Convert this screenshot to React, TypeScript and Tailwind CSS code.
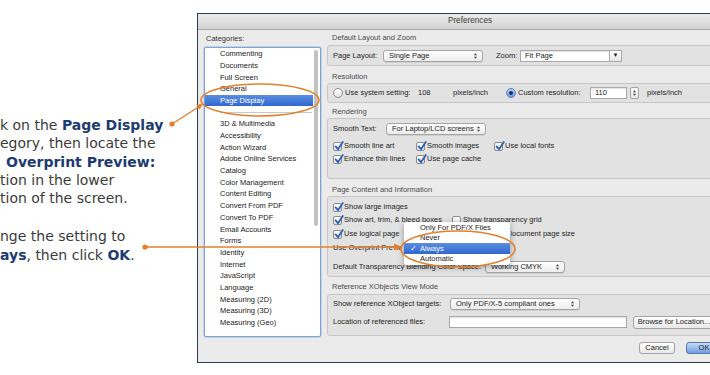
const ORANGE = '#e3802c';

function Check({ on = true }: { on?: boolean }) {
  return (
    <span className="relative inline-flex h-[9px] w-[9px] shrink-0 items-center justify-center rounded-[2px] border border-[#8c8c8c] bg-gradient-to-b from-white to-[#e6e6e6]">
      {on && (
        <svg viewBox="0 0 10 10" className="absolute -top-[2px] left-[0px] h-[10px] w-[10px]">
          <path d="M1.6 5.4 L4 8.2 L8.8 1" fill="none" stroke="#2c5fb8" strokeWidth="1.8" strokeLinecap="round" strokeLinejoin="round" />
        </svg>
      )}
    </span>
  );
}

function Radio({ on = false }: { on?: boolean }) {
  return (
    <span
      className={`inline-flex h-[10px] w-[10px] shrink-0 items-center justify-center rounded-full border ${
        on ? 'border-[#5a7fbf] bg-gradient-to-b from-[#bcd3f2] to-[#6e9ae0]' : 'border-[#8c8c8c] bg-gradient-to-b from-white to-[#e4e4e4]'
      }`}
    >
      {on && <span className="h-[4px] w-[4px] rounded-full bg-[#17335f]" />}
    </span>
  );
}

function Arrows() {
  return (
    <svg viewBox="0 0 6 10" className="h-[8px] w-[5px] shrink-0">
      <path d="M1 4 L3 1.5 L5 4 Z M1 6 L3 8.5 L5 6 Z" fill="#444" />
    </svg>
  );
}

function Pop({ label, w }: { label: string; w: string }) {
  return (
    <span className={`flex h-[12px] ${w} shrink-0 items-center justify-between whitespace-nowrap rounded-[3px] border border-[#a3a3a3] bg-gradient-to-b from-white to-[#ececec] pl-[5px] pr-[4px] shadow-[0_1px_0_rgba(0,0,0,0.08)]`}>
      <span>{label}</span>
      <Arrows />
    </span>
  );
}

function Field({ w, children }: { w: string; children?: React.ReactNode }) {
  return (
    <span className={`flex h-[12px] ${w} shrink-0 items-center border border-[#a9a9a9] bg-white pl-[4px] shadow-[inset_0_1px_1px_rgba(0,0,0,0.12)]`}>
      {children}
    </span>
  );
}

function Label({ children }: { children: React.ReactNode }) {
  return <div className="flex h-full items-end pb-[2px] pl-[5px] leading-[10px] text-[#4a4a4a]">{children}</div>;
}

function Box({ className, children }: { className: string; children: React.ReactNode }) {
  return <div className={`rounded-[3px] border border-[#c6c6c6] bg-[#e2e2e2] pl-[5px] ${className}`}>{children}</div>;
}

const categories = [
  'Commenting',
  'Documents',
  'Full Screen',
  'General',
  'Page Display',
  '-',
  '3D & Multimedia',
  'Accessibility',
  'Action Wizard',
  'Adobe Online Services',
  'Catalog',
  'Color Management',
  'Content Editing',
  'Convert From PDF',
  'Convert To PDF',
  'Email Accounts',
  'Forms',
  'Identity',
  'Internet',
  'JavaScript',
  'Language',
  'Measuring (2D)',
  'Measuring (3D)',
  'Measuring (Geo)',
];

export default function App() {
  return (
    <div className="relative flex h-[375px] w-[710px] overflow-hidden bg-white">
      {/* instructions, cut at the left edge */}
      <div className="w-[197px] shrink-0 whitespace-nowrap pt-[116px] font-['DejaVu_Sans',sans-serif] text-[14px] leading-[18.3px] text-[#3b3b3b]">
        <p>
          k on the <b className="text-[#1d3b70]">Page Display</b>
        </p>
        <p>egory, then locate the</p>
        <p className="pl-[6px]">
          <b className="text-[#1d3b70]">Overprint Preview:</b>
        </p>
        <p>tion in the lower</p>
        <p>tion of the screen.</p>
        <p className="mt-[20px]">nge the setting to</p>
        <p>
          <b className="text-[#1d3b70]">ays</b>, then click <b className="text-[#1d3b70]">OK</b>.
        </p>
      </div>

      {/* Preferences dialog */}
      <div className="mt-[13px] flex h-[350px] w-[546px] shrink-0 flex-col border border-[#2a3b5e] bg-[#ebebeb] font-['Liberation_Sans',sans-serif] text-[7.5px] text-[#222]">
        <div className="flex h-[16px] shrink-0 items-center justify-center border-b border-[#a9a9a9] bg-gradient-to-b from-[#ececec] to-[#d2d2d2] text-[8.2px] text-[#3a3a3a]">
          Preferences
        </div>

        <div className="flex flex-1 pl-[6px] pr-[8px]">
          {/* categories */}
          <div className="flex w-[117px] shrink-0 flex-col">
            <div className="flex h-[17px] items-center pl-[2px] text-[#333]">Categories:</div>
            <div className="relative h-[290px] rounded-[2px] border border-[#7fa3d4] bg-white shadow-[0_0_0_1px_rgba(127,163,212,0.35)]">
              {categories.map((c, i) =>
                c === '-' ? (
                  <div key={i} className="flex h-[11.7px] items-center pl-[15px] pr-[8px]">
                    <div className="h-px w-full bg-[#c9c9c9]" />
                  </div>
                ) : (
                  <div
                    key={i}
                    className={`flex h-[11.7px] items-center pl-[15px] ${
                      c === 'Page Display' ? 'mr-[7px] bg-gradient-to-b from-[#5b8ee0] to-[#2f67cf] text-white' : ''
                    }`}
                  >
                    {c}
                  </div>
                ),
              )}
              <div className="absolute right-[2px] top-[2px] h-[176px] w-[4px] rounded-full bg-[#c2c2c2]" />
            </div>
          </div>

          {/* settings */}
          <div className="ml-[6px] flex flex-1 flex-col">
            <div className="h-[15px]">
              <Label>Default Layout and Zoom</Label>
            </div>
            <Box className="flex h-[21px] items-center">
              <span className="w-[50px] shrink-0">Page Layout:</span>
              <Pop label="Single Page" w="w-[100px]" />
              <span className="ml-[13px] w-[24px] shrink-0">Zoom:</span>
              <Field w="w-[90px]">Fit Page</Field>
              <span className="flex h-[12px] w-[12px] items-center justify-center border border-l-0 border-[#a9a9a9] bg-gradient-to-b from-white to-[#e6e6e6] text-[6px]">
                ▼
              </span>
            </Box>

            <div className="h-[17px]">
              <Label>
                <span className="translate-y-[1px]">Resolution</span>
              </Label>
            </div>
            <Box className="flex h-[20px] items-center">
              <Radio />
              <span className="ml-[2px] w-[73px] shrink-0">Use system setting:</span>
              <span className="w-[35px] shrink-0">108</span>
              <span className="w-[53px] shrink-0">pixels/inch</span>
              <Radio on />
              <span className="ml-[2px] w-[72px] shrink-0">Custom resolution:</span>
              <Field w="w-[37px]">110</Field>
              <span className="ml-[3px] flex h-[12px] w-[9px] items-center justify-center rounded-[2px] border border-[#a3a3a3] bg-gradient-to-b from-white to-[#e6e6e6]">
                <Arrows />
              </span>
              <span className="ml-[8px]">pixels/inch</span>
            </Box>

            <div className="h-[15px]">
              <Label>
                <span className="translate-y-[1px]">Rendering</span>
              </Label>
            </div>
            <Box className="h-[61px] pt-[4px]">
              <div className="flex h-[12px] items-center">
                <span className="w-[53px] shrink-0">Smooth Text:</span>
                <Pop label="For Laptop/LCD screens" w="w-[100px]" />
              </div>
              <div className="mt-[5px] flex h-[12px] items-center">
                <span className="flex w-[83px] items-center gap-[2px]">
                  <Check /> Smooth line art
                </span>
                <span className="flex w-[78px] items-center gap-[2px]">
                  <Check /> Smooth images
                </span>
                <span className="flex items-center gap-[2px]">
                  <Check /> Use local fonts
                </span>
              </div>
              <div className="mt-[1px] flex h-[12px] items-center">
                <span className="flex w-[83px] items-center gap-[2px]">
                  <Check /> Enhance thin lines
                </span>
                <span className="flex items-center gap-[2px]">
                  <Check /> Use page cache
                </span>
              </div>
            </Box>

            <div className="h-[17px]">
              <Label>
                <span className="translate-y-[1px]">Page Content and Information</span>
              </Label>
            </div>
            <Box className="h-[81px] pt-[4px]">
              <div className="flex h-[12px] items-center gap-[2px]">
                <Check /> Show large images
              </div>
              <div className="mt-[1px] flex h-[12px] items-center">
                <span className="flex w-[119px] items-center gap-[2px]">
                  <Check /> Show art, trim, &amp; bleed boxes
                </span>
                <span className="flex items-center gap-[2px]">
                  <Check on={false} /> Show transparency grid
                </span>
              </div>
              <div className="mt-[2px] flex h-[12px] items-center">
                <span className="flex w-[119px] items-center gap-[2px]">
                  <Check />
                  <span className="w-[56px] overflow-hidden whitespace-nowrap">Use logical page numbers</span>
                </span>
                <span className="ml-[59px] flex w-[64px] justify-end overflow-hidden whitespace-nowrap">
                  Always show document page size
                </span>
              </div>
              <div className="mt-[2px] flex h-[12px] items-center">
                <span className="w-[68px] overflow-hidden whitespace-nowrap">Use Overprint Preview:</span>
              </div>
              <div className="mt-[7px] flex h-[12px] items-center">
                <span className="w-[152px] shrink-0">Default Transparency Blending Color Space:</span>
                <Pop label="Working CMYK" w="w-[80px]" />
              </div>
            </Box>

            <div className="h-[17px]">
              <Label>Reference XObjects View Mode</Label>
            </div>
            <Box className="h-[42px] pt-[3px]">
              <div className="flex h-[12px] items-center">
                <span className="w-[117px] shrink-0">Show reference XObject targets:</span>
                <Pop label="Only PDF/X-5 compliant ones" w="w-[130px]" />
              </div>
              <div className="mt-[6px] flex h-[12px] items-center">
                <span className="w-[116px] shrink-0">Location of referenced files:</span>
                <Field w="w-[178px]" />
                <span className="ml-[6px] flex h-[13px] w-[82px] shrink-0 items-center justify-center rounded-[3px] border border-[#a3a3a3] bg-gradient-to-b from-white to-[#e8e8e8]">
                  Browse for Location...
                </span>
              </div>
            </Box>

            <div className="mt-[5px] flex h-[13px] items-center pl-[312px]">
              <span className="flex h-[12px] w-[36px] items-center justify-center rounded-[3px] border border-[#a3a3a3] bg-gradient-to-b from-white to-[#e8e8e8]">
                Cancel
              </span>
              <span className="ml-[11px] flex h-[12px] w-[36px] items-center justify-center rounded-[3px] border border-[#5577aa] bg-gradient-to-b from-[#c9dcf6] to-[#6f9de0]">
                OK
              </span>
            </div>
          </div>
        </div>
      </div>

      {/* open popup menu for Use Overprint Preview */}
      <div className="absolute left-[404px] top-[222px] w-[106px] rounded-[3px] bg-white py-[1px] font-['Liberation_Sans',sans-serif] text-[7.5px] text-[#222] shadow-[0_2px_6px_rgba(0,0,0,0.35)]">
        <div className="flex h-[10px] items-center pl-[16px]">Only For PDF/X Files</div>
        <div className="flex h-[10px] items-center pl-[16px]">Never</div>
        <div className="flex h-[11px] items-center bg-gradient-to-b from-[#5b8ee0] to-[#2f67cf] pl-[6px] text-white">
          <span className="w-[10px]">✓</span>Always
        </div>
        <div className="flex h-[10px] items-center pl-[16px]">Automatic</div>
      </div>

      {/* annotation marks */}
      <svg className="pointer-events-none absolute left-0 top-0 h-[375px] w-[710px]" viewBox="0 0 710 375">
        <ellipse cx="260" cy="100" rx="59" ry="16" fill="none" stroke={ORANGE} strokeWidth="1.6" />
        <ellipse cx="458" cy="249" rx="57" ry="18" fill="none" stroke={ORANGE} strokeWidth="1.6" />
        <circle cx="172" cy="124" r="2.6" fill={ORANGE} />
        <line x1="172" y1="124" x2="200" y2="106" stroke={ORANGE} strokeWidth="1.4" />
        <path d="M203 104 L196 104.5 L199.5 109.5 Z" fill={ORANGE} />
        <circle cx="145" cy="247" r="2.6" fill={ORANGE} />
        <line x1="145" y1="247" x2="395" y2="247" stroke={ORANGE} strokeWidth="1.4" />
        <path d="M402 247 L394 243.5 L394 250.5 Z" fill={ORANGE} />
      </svg>
    </div>
  );
}
